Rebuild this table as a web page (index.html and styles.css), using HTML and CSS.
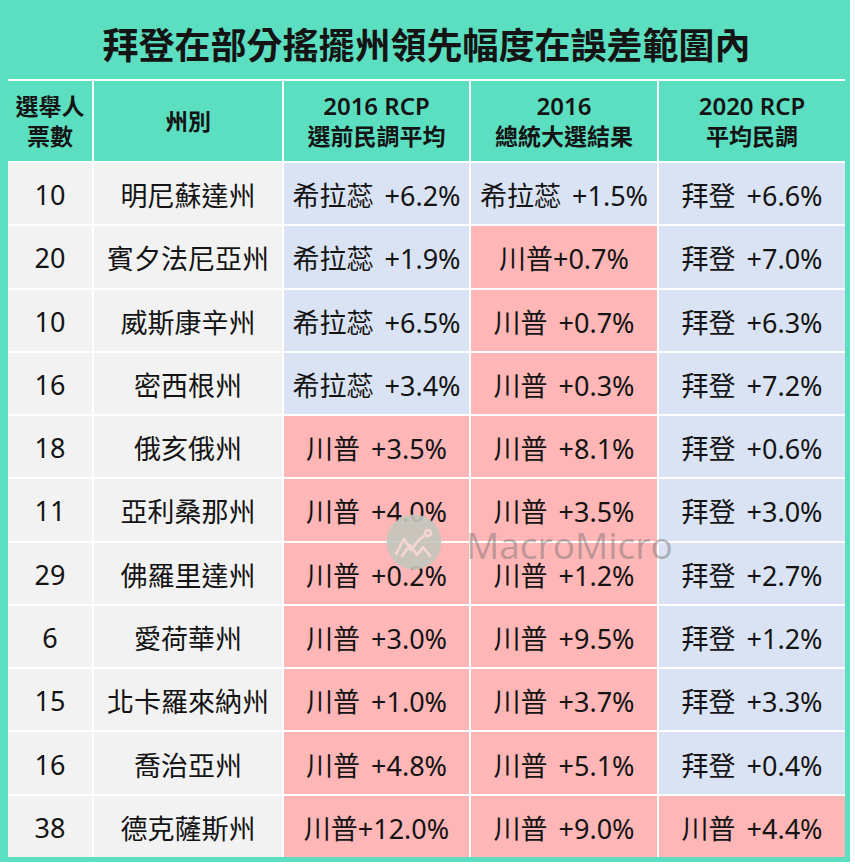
FILE: index.html
```html
<!DOCTYPE html>
<html lang="zh-Hant">
<head>
<meta charset="utf-8">
<title>拜登在部分搖擺州領先幅度在誤差範圍內</title>
<link rel="stylesheet" href="styles.css">
</head>
<body>
<div class="frame">
  <div class="title">拜登在部分搖擺州領先幅度在誤差範圍內</div>
  <div class="table">
    <div class="th">選舉人<br>票數</div>
    <div class="th">州別</div>
    <div class="th"><span class="lat">2016 RCP</span><br>選前民調平均</div>
    <div class="th"><span class="lat">2016</span><br>總統大選結果</div>
    <div class="th"><span class="lat">2020 RCP</span><br>平均民調</div>

    <div class="td g">10</div><div class="td g">明尼蘇達州</div><div class="td b">希拉蕊 +6.2%</div><div class="td b">希拉蕊 +1.5%</div><div class="td b">拜登 +6.6%</div>
    <div class="td g">20</div><div class="td g">賓夕法尼亞州</div><div class="td b">希拉蕊 +1.9%</div><div class="td r">川普+0.7%</div><div class="td b">拜登 +7.0%</div>
    <div class="td g">10</div><div class="td g">威斯康辛州</div><div class="td b">希拉蕊 +6.5%</div><div class="td r">川普 +0.7%</div><div class="td b">拜登 +6.3%</div>
    <div class="td g">16</div><div class="td g">密西根州</div><div class="td b">希拉蕊 +3.4%</div><div class="td r">川普 +0.3%</div><div class="td b">拜登 +7.2%</div>
    <div class="td g">18</div><div class="td g">俄亥俄州</div><div class="td r">川普 +3.5%</div><div class="td r">川普 +8.1%</div><div class="td b">拜登 +0.6%</div>
    <div class="td g">11</div><div class="td g">亞利桑那州</div><div class="td r">川普 +4.0%</div><div class="td r">川普 +3.5%</div><div class="td b">拜登 +3.0%</div>
    <div class="td g">29</div><div class="td g">佛羅里達州</div><div class="td r">川普 +0.2%</div><div class="td r">川普 +1.2%</div><div class="td b">拜登 +2.7%</div>
    <div class="td g">6</div><div class="td g">愛荷華州</div><div class="td r">川普 +3.0%</div><div class="td r">川普 +9.5%</div><div class="td b">拜登 +1.2%</div>
    <div class="td g">15</div><div class="td g">北卡羅來納州</div><div class="td r">川普 +1.0%</div><div class="td r">川普 +3.7%</div><div class="td b">拜登 +3.3%</div>
    <div class="td g">16</div><div class="td g">喬治亞州</div><div class="td r">川普 +4.8%</div><div class="td r">川普 +5.1%</div><div class="td b">拜登 +0.4%</div>
    <div class="td g">38</div><div class="td g">德克薩斯州</div><div class="td r">川普+12.0%</div><div class="td r">川普 +9.0%</div><div class="td r">川普 +4.4%</div>
  </div>
  <div class="watermark">
    <svg class="wm-logo" viewBox="0 0 56 56" width="56" height="56">
      <circle cx="28" cy="28" r="27.5" fill="#c4c6bd" fill-opacity="0.9"/>
      <polyline points="10,40 18,25 25,36 32,27 39,21" fill="none" stroke="#f6d6d2" stroke-width="2.6" stroke-linejoin="round" stroke-linecap="round"/>
      <polyline points="16,42 24,31 31,41 37,33 44,42" fill="none" stroke="#f6d6d2" stroke-width="2.6" stroke-linejoin="round" stroke-linecap="round"/>
      <circle cx="42" cy="19" r="3" fill="none" stroke="#f6d6d2" stroke-width="2.4"/>
    </svg>
    <span class="wm-text">MacroMicro</span>
  </div>
</div>
</body>
</html>
```

FILE: styles.css
```css
html, body {
  margin: 0;
  padding: 0;
  background: #ffffff;
}

body {
  font-family: "Noto Sans", "Noto Sans CJK TC", sans-serif;
  color: #141414;
}

.frame {
  position: relative;
  width: 850px;
  height: 862px;
  box-sizing: border-box;
  background: #5cdfc1;
  padding: 0 5px 5px 8px;
  display: flex;
  flex-direction: column;
}

.title {
  height: 79px;
  flex: none;
  display: flex;
  align-items: center;
  justify-content: center;
  font-size: 36px;
  font-weight: 700;
  padding-top: 8px;
  box-sizing: border-box;
}

.table {
  flex: 1;
  display: grid;
  grid-template-columns: 84px 188px 185px 186px 186px;
  grid-template-rows: 80px repeat(11, 1fr);
  gap: 2px;
  background: #ffffff;
  border-top: 2px solid #ffffff;
}

.th {
  background: #5cdfc1;
  display: flex;
  flex-direction: column;
  align-items: center;
  justify-content: center;
  text-align: center;
  font-size: 23px;
  font-weight: 700;
  line-height: 30px;
}

.th br {
  display: none;
}

.lat {
  font-size: 24px;
  font-weight: 600;
}

.td {
  display: flex;
  align-items: center;
  justify-content: center;
  font-size: 27px;
  word-spacing: 4px;
  white-space: nowrap;
  padding-top: 2px;
  box-sizing: border-box;
}

.g { background: #f2f2f2; }
.b { background: #dae3f3; }
.r { background: #ffb6b6; }

.watermark {
  position: absolute;
  left: 386px;
  top: 514px;
  display: flex;
  align-items: center;
  gap: 24px;
  pointer-events: none;
}

.wm-logo {
  display: block;
}

.wm-text {
  font-family: "Open Sans", sans-serif;
  font-size: 37px;
  color: rgba(110, 110, 110, 0.45);
  line-height: 1;
  margin-top: 4px;
}
```
